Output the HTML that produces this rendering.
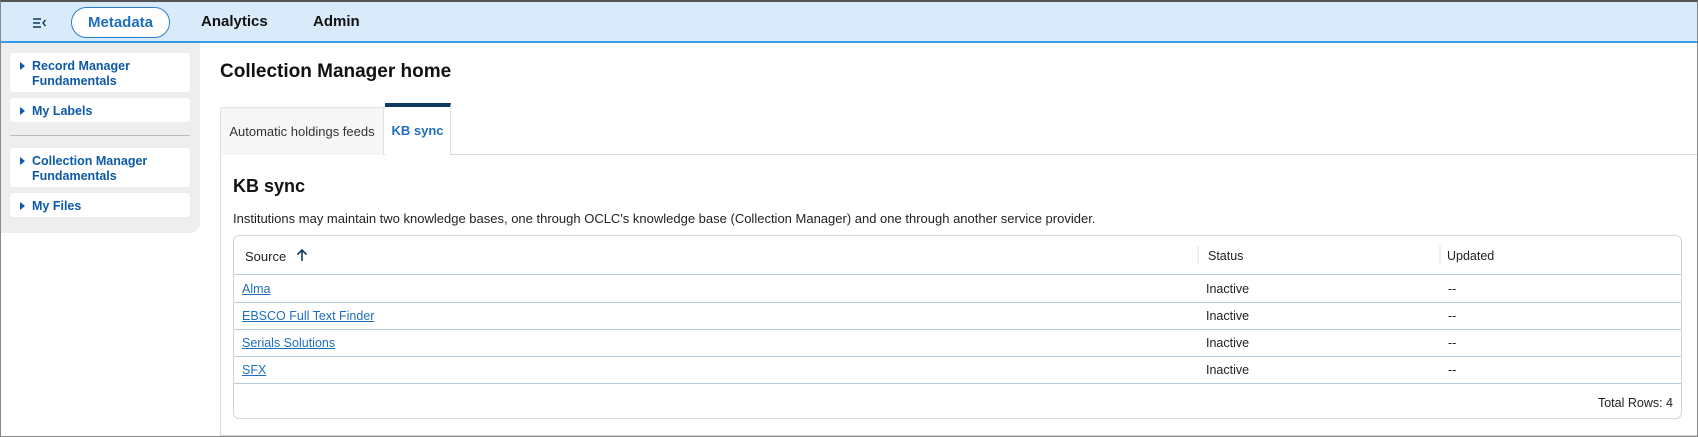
<!DOCTYPE html>
<html><head><meta charset="utf-8"><style>
*{box-sizing:border-box;margin:0;padding:0}
body{width:1698px;height:437px;overflow:hidden;font-family:"Liberation Sans",sans-serif;background:#fff;position:relative;color:#1a1a1a}
.frame{position:absolute;left:0;top:0;width:1698px;height:437px;border:1px solid #888;border-top:2px solid #555;pointer-events:none;z-index:10}
.top{position:absolute;left:0;top:0;width:1698px;height:43px;background:#d9ebfb;border-bottom:2px solid #3a9be6}
.pill{position:absolute;left:71px;top:7px;width:99px;height:31px;border:1px solid #2a7fd0;border-radius:16px;background:#fff;color:#1f6fbf;font-weight:bold;font-size:15px;text-align:center;line-height:29px}
.nav{position:absolute;top:13px;font-weight:bold;font-size:15px;color:#111}
.side{position:absolute;left:0;top:43px;width:200px;height:190px;background:#eeeeee;border-bottom-right-radius:10px}
.card{position:absolute;left:10px;width:180px;background:#fff;border-radius:3px;color:#0d5aa7;font-weight:bold;font-size:12.5px;line-height:15px;padding:6px 0 0 22px}
.card:before{content:"";position:absolute;left:10px;top:9px;border-left:5px solid #0d5aa7;border-top:4px solid transparent;border-bottom:4px solid transparent}
.div{position:absolute;left:10px;width:180px;height:1px;background:#bbb}
h1{position:absolute;left:220px;top:61px;font-size:19px;font-weight:bold;color:#111}
.tab1{position:absolute;left:220px;top:107px;width:164px;height:48px;background:#f6f6f6;border:1px solid #dde3ea;border-bottom:none;font-size:13px;color:#333;line-height:48px;text-align:center}
.tab2{position:absolute;left:385px;top:103px;width:66px;height:52px;background:#fff;border-top:4px solid #0d3a5e;border-right:1px solid #dde3ea;font-size:13px;color:#1f6fbf;font-weight:bold;line-height:48px;text-align:center}
.panel{position:absolute;left:220px;top:154px;width:1478px;height:282px;border:1px solid #cdd7e1}
h2{position:absolute;left:233px;top:176px;font-size:18px;font-weight:bold;color:#111}
.desc{position:absolute;left:233px;top:211px;font-size:13px;color:#222}
.tbl{position:absolute;left:233px;top:235px;width:1449px;height:184px;border:1px solid #cdd7e1;border-radius:6px}
.hl{position:absolute;left:0;width:100%;height:1px;background:#b9ccdc}
.t{position:absolute;font-size:12.5px;color:#222}
.a{color:#1f6fbf;text-decoration:underline}
.sep{position:absolute;top:10px;width:2px;height:18px;background:#eee}
</style></head><body>
<div class="top">
<svg style="position:absolute;left:33px;top:18px" width="14" height="10" viewBox="0 0 14 10"><path d="M0 1H8M0 5H7M0 9H8" stroke="#0d3a5e" stroke-width="1.6"/><path d="M12.5 2L10 5L12.5 8" stroke="#0d3a5e" stroke-width="1.4" fill="none"/></svg>
<div class="pill">Metadata</div>
<div class="nav" style="left:201px">Analytics</div>
<div class="nav" style="left:313px">Admin</div>
</div>
<div class="side">
<div class="card" style="top:10px;height:39px">Record Manager<br>Fundamentals</div>
<div class="card" style="top:55px;height:24px">My Labels</div>
<div class="div" style="top:92px"></div>
<div class="card" style="top:105px;height:39px">Collection Manager<br>Fundamentals</div>
<div class="card" style="top:150px;height:24px">My Files</div>
</div>
<h1>Collection Manager home</h1>
<div class="panel"></div>
<div class="tab1">Automatic holdings feeds</div>
<div class="tab2">KB sync</div>
<h2>KB sync</h2>
<div class="desc">Institutions may maintain two knowledge bases, one through OCLC's knowledge base (Collection Manager) and one through another service provider.</div>
<div class="tbl">
<div class="t" style="left:11px;top:13px;font-size:13px">Source</div>
<svg style="position:absolute;left:62px;top:12px" width="12" height="14" viewBox="0 0 12 14"><path d="M6 13V2M1.5 6.5L6 2L10.5 6.5" stroke="#0d3a5e" stroke-width="1.6" fill="none"/></svg>
<div class="sep" style="left:963px"></div><div class="sep" style="left:1205px"></div>
<div class="t" style="left:974px;top:13px">Status</div>
<div class="t" style="left:1213px;top:13px">Updated</div>
<div class="hl" style="top:38px"></div>
<div class="hl" style="top:66px"></div>
<div class="hl" style="top:93px"></div>
<div class="hl" style="top:120px"></div>
<div class="hl" style="top:147px"></div>
<div class="t a" style="left:8px;top:46px">Alma</div>
<div class="t a" style="left:8px;top:73px">EBSCO Full Text Finder</div>
<div class="t a" style="left:8px;top:100px">Serials Solutions</div>
<div class="t a" style="left:8px;top:127px">SFX</div>
<div class="t" style="left:972px;top:46px">Inactive</div>
<div class="t" style="left:972px;top:73px">Inactive</div>
<div class="t" style="left:972px;top:100px">Inactive</div>
<div class="t" style="left:972px;top:127px">Inactive</div>
<div class="t" style="left:1214px;top:46px">--</div>
<div class="t" style="left:1214px;top:73px">--</div>
<div class="t" style="left:1214px;top:100px">--</div>
<div class="t" style="left:1214px;top:127px">--</div>
<div class="t" style="right:8px;top:160px">Total Rows: 4</div>
</div>
<div class="frame"></div>
</body></html>
